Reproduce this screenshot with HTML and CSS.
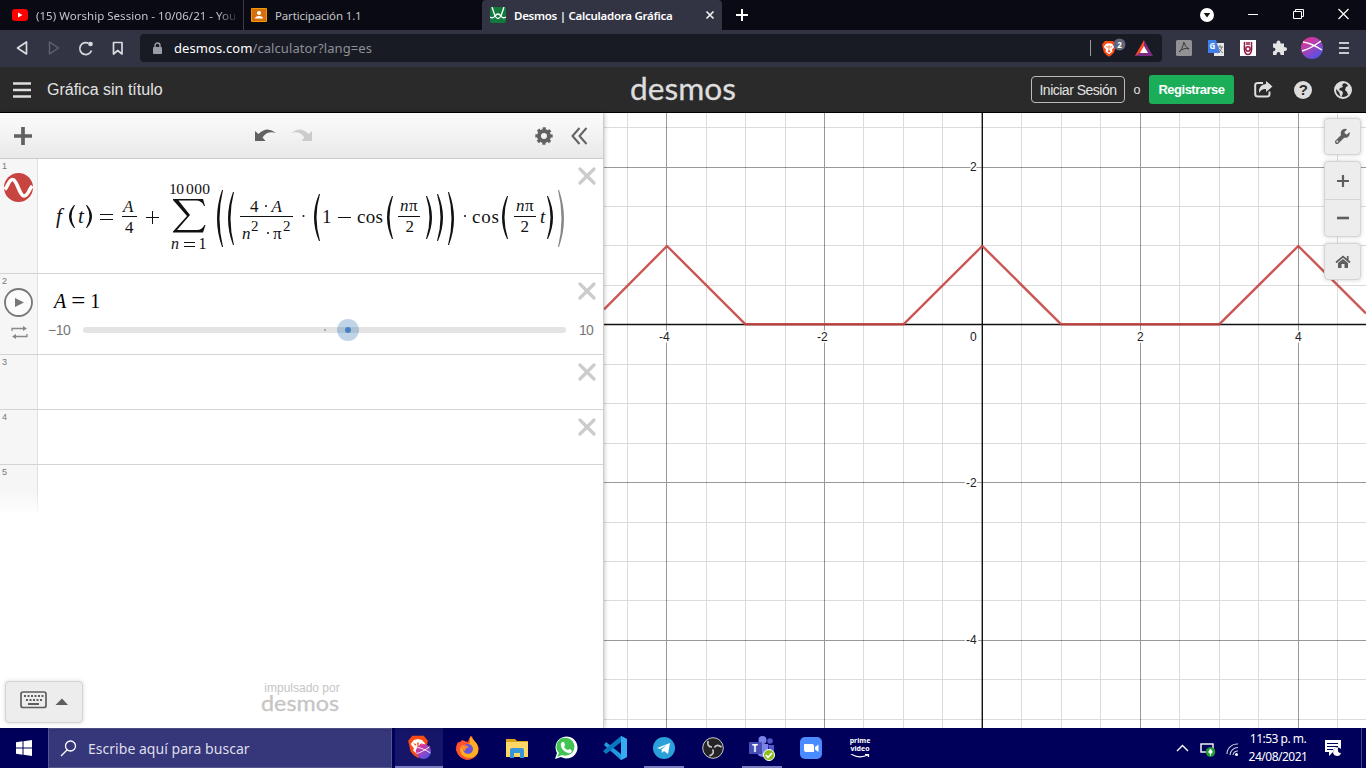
FILE: index.html
```html
<!DOCTYPE html>
<html lang="es">
<head>
<meta charset="utf-8">
<title>Desmos | Calculadora Gráfica</title>
<link rel="stylesheet" href="styles.css">
</head>
<body>
<svg class="defs" width="0" height="0">
  <symbol id="lp" viewBox="0 0 6 50" preserveAspectRatio="none"><path d="M6 0Q-1 25 6 50H5Q-5 25 5 0Z"/></symbol>
  <symbol id="rp" viewBox="0 0 6 50" preserveAspectRatio="none"><path d="M0 0Q7 25 0 50H1Q11 25 1 0Z"/></symbol>
  <symbol id="x" viewBox="0 0 18 18"><path d="M2 2L16 16M16 2L2 16" stroke="#ccc" stroke-width="3.200" stroke-linecap="round"/></symbol>
  <symbol id="ball" viewBox="0 0 22 22"><circle cx="11" cy="11" r="11" fill="url(#bg)"/><path d="M1 14Q9 12 20 4M2 5Q10 6 21 13" fill="none" stroke="#fff" stroke-width="1.300"/></symbol>
  <symbol id="lion" viewBox="0 0 24 28"><path d="M5 1H19L24 7 21 20Q18 25 12 28Q6 25 3 20L0 7Z" fill="#fb4b13"/><path d="M7 6L12 5 17 6 21 11 17 16 18 19 12 24 6 19 7 16 3 11Z" fill="#fff"/><path d="M6 10L10 11 9 13ZM18 10L14 11 15 13ZM11 9H13L12.500 17 15 19 12 21 9 19 11.500 17Z" fill="#fb4b13"/></symbol>
  <linearGradient id="bg" x1="0" y1="0" x2="0.700" y2="1"><stop offset="0" stop-color="#f7298d"/><stop offset="0.450" stop-color="#b340ae"/><stop offset="1" stop-color="#4e52ea"/></linearGradient>
</svg>

<div class="tabs">
  <div class="tab tab-yt">
    <svg width="16" height="12"><rect width="16" height="12" rx="3" fill="#f00"/><path d="M6 3.500V8.500L10.500 6Z" fill="#fff"/></svg>
    <span class="tab-text fade">(15) Worship Session - 10/06/21 - You</span>
  </div>
  <div class="tab tab-class">
    <svg width="16" height="14"><rect width="16" height="14" rx="1" fill="#f29900"/><rect x="1" y="1" width="14" height="12" fill="#d56e0c"/><circle cx="8" cy="5" r="2" fill="#fff"/><path d="M4 10.500Q4 8 8 8T12 10.500Z" fill="#fff"/></svg>
    <span class="tab-text">Participación 1.1</span>
  </div>
  <div class="tab tab-active">
    <svg width="16" height="16"><rect width="16" height="16" rx="2" fill="#127a3d"/><path d="M2 0L5 9Q8 14 11 9L14 0M0 10Q3 12 5 9Q8 5 11 9Q13 12 16 10" fill="none" stroke="#fff" stroke-width="1.300"/></svg>
    <span class="tab-text">Desmos | Calculadora Gráfica</span>
    <svg width="10" height="10" class="tab-close"><path d="M1.500 1.500L8.500 8.500M8.500 1.500L1.500 8.500" stroke="#eee" stroke-width="1.700"/></svg>
  </div>
  <svg class="newtab" width="12" height="12"><path d="M6 0V12M0 6H12" stroke="#fff" stroke-width="2"/></svg>
  <div class="win">
    <svg width="14" height="14"><circle cx="7" cy="7" r="7" fill="#fff"/><path d="M3.700 5H10.300L7 9.500Z" fill="#111"/></svg>
    <svg width="10" height="14"><path d="M0 6.500H10" stroke="#fff"/></svg>
    <svg width="11" height="14"><path d="M.5 3.500H8.500V10.500H.5ZM2.500 3V1.500H10.500V8.500H9" fill="none" stroke="#fff"/></svg>
    <svg width="11" height="14"><path d="M.5 1L10.500 11M10.500 1L.5 11" stroke="#fff" stroke-width="1.200"/></svg>
  </div>
</div>

<div class="bar">
  <svg width="124" height="20" class="nav" fill="none" stroke="#d8dade" stroke-width="1.700" stroke-linejoin="round"><path d="M10.500 4V16L1.500 10Z"/><path d="M33.500 4V16L42.500 10Z" stroke="#61646f" stroke-width="1.400"/><path d="M75.500 12.500A6 6 0 1 1 72.500 5.200"/><circle cx="74.500" cy="6" r="1.500" fill="#d8dade"/><path d="M97.500 4.500H106V16L101.700 12.500 97.500 16Z"/></svg>
  <div class="address">
    <svg width="9" height="12"><rect y="5" width="9" height="7" rx="1" fill="#9a9da5"/><path d="M2 5V3.500A2.500 2.500 0 0 1 7 3.500V5" fill="none" stroke="#9a9da5" stroke-width="1.400"/></svg>
    <span class="url"><b>desmos.com</b>/calculator?lang=es</span>
    <svg class="shields" width="65" height="24"><path d="M.5 4V20" stroke="#999"/><use href="#lion" x="12" y="4" width="14" height="17"/><circle cx="29.500" cy="8.500" r="6" fill="#60667a"/><text x="27.300" y="11.500" font-size="8" font-weight="bold" fill="#fff">2</text><path d="M54 4L45 20H54Z" fill="#fb4b23"/><path d="M54 4L63 20H45L54 14Z" fill="#7c2b7f"/><path d="M54 10L50 17H58Z" fill="#fff"/></svg>
  </div>
  <svg width="170" height="26" class="ext"><rect y="5" width="16" height="16" rx="1.500" fill="#929292"/><path d="M3 17Q6 15 7.500 9Q7.500 6 8.500 8Q8 11 13 14Q8 12 3 17" fill="none" stroke="#3a3a3a"/><rect x="38" y="8" width="10" height="13" fill="#e5e7e9"/><path d="M32 5H40L44 18H32Z" fill="#3f80ec"/><text x="33.500" y="14" font-size="8" font-weight="bold" fill="#fff">G</text><path d="M41 12H47M44 10V12M46 12Q45 17 41 18M42 13Q44 16 47 18" fill="none" stroke="#777"/><rect x="64" y="5" width="16" height="16" fill="#fff"/><path d="M68.500 7V9.500Q67.500 19.500 72 19.500T75.500 9.500V7M71 7V10M73 7V10" fill="none" stroke="#921944" stroke-width="1.500"/><circle cx="72" cy="14" r="2.200" fill="none" stroke="#921944" stroke-width="1.500"/><path d="M97 8.500H100.500Q100.500 5.500 102.500 5.500T104.500 8.500H108V12Q111 12 111 14T108 16V20H104.500Q104.500 17 102.500 17T100.500 20H97V16.500Q99.500 16 99.500 14.300T97 12.500Z" fill="#e4e4e7"/><use href="#ball" x="125" y="2" width="22" height="22"/></svg>
  <svg width="10" height="26" class="menu"><path d="M0 8H10M0 13H10M0 18H10" stroke="#c9cad0" stroke-width="1.800"/></svg>
</div>

<header class="header">
  <svg width="19" height="16"><path d="M0 1.500H18M0 8H18M0 14.500H18" stroke="#ddd" stroke-width="2.600"/></svg>
  <span class="title">Gráfica sin título</span>
  <svg class="logo" width="110" height="40"><text x="0" y="30" textLength="106" lengthAdjust="spacingAndGlyphs">desmos</text></svg>
  <span class="btn login">Iniciar Sesión</span><span class="o">o</span><span class="btn signup">Registrarse</span>
  <svg class="share" width="19" height="18"><path d="M9 2H4Q1.200 2 1.200 4V13Q1.200 15.500 4 15.500H13Q15.500 15.500 15.500 13V10.500" fill="none" stroke="#ddd" stroke-width="2"/><path d="M12 0L18.500 5.500 12 11V8Q7.500 7.500 5 12Q4.500 3.500 12 3Z" fill="#ddd"/></svg>
  <svg width="18" height="18"><circle cx="9" cy="9" r="9" fill="#ddd"/><text x="4.700" y="14" class="q">?</text></svg>
  <svg class="globe" width="18" height="18"><circle cx="9" cy="9" r="8" fill="none" stroke="#ddd" stroke-width="2"/><path d="M2 4L7 1 10 2 8 4 9 6 6 7 5 9 8 10 9 12 7 17 6 14 5 11 2 8ZM13 3L16 5 17 11 14 14 13 11 11 9 12 6 14 5Z" fill="#ddd"/></svg>
</header>

<main class="main">
  <section class="panel">
    <div class="toolbar">
      <svg width="18" height="18" class="add"><path d="M9 0V18M0 9H18" stroke="#616161" stroke-width="3.700"/></svg>
      <svg width="58" height="16" class="undo"><path d="M0 3L3.500 6Q12-2.500 21 5Q12 2.500 7.500 9.500L10.500 13H0Z" fill="#616161"/><path d="M57 3L53.500 6Q45-2.500 36 5Q45 2.500 49.500 9.500L46.500 13H57Z" fill="#ccc"/></svg>
      <svg width="18" height="18" viewBox="-9 -9 18 18" class="gear"><circle r="5" fill="none" stroke="#616161" stroke-width="4"/><circle r="7.200" fill="none" stroke="#616161" stroke-width="3" stroke-dasharray="3 2.655" transform="rotate(-12)"/></svg>
      <svg width="17" height="18"><path d="M8.500 1L1.500 9 8.500 17M15.500 1L8.500 9 15.500 17" fill="none" stroke="#616161" stroke-width="2"/></svg>
    </div>

    <div class="row row-formula">
      <div class="gutter"><span>1</span>
        <svg width="29" height="29"><circle cx="14.500" cy="14.500" r="14.500" fill="#c74440"/><path d="M.8 16.500C4 13 5 6.500 8.500 6.500C13 6.500 15.500 23 20 23C24 23 25 16 28.200 13" fill="none" stroke="#fff" stroke-width="3.600"/></svg>
      </div>
      <svg class="formula" width="530" height="114" viewBox="38 159 530 114">
        <g class="it"><text x="56" y="223" font-size="21">f</text><text x="78" y="223" font-size="21">t</text><text x="123" y="212" font-size="17">A</text><text x="171" y="249" font-size="16">n</text><text x="271.500" y="212" font-size="17">A</text><text x="242" y="239" font-size="17">n</text><text x="400" y="211" font-size="17">n</text><text x="516" y="211" font-size="17">n</text><text x="540" y="223">t</text></g>
        <text x="125" y="233" font-size="17">4</text>
        <text x="169" y="194" font-size="15.500" textLength="15">10</text><text x="186" y="194" font-size="15.500" textLength="24">000</text>
        <text x="198.500" y="249" font-size="16">1</text>
        <text x="250" y="212" font-size="17">4</text>
        <text x="251" y="231" font-size="15">2</text><text x="273" y="239" font-size="17">π</text><text x="283" y="231" font-size="15">2</text>
        <text x="322" y="223">1</text><text x="357" y="223" textLength="26">cos</text>
        <text x="409" y="211" font-size="17">π</text><text x="405.500" y="232" font-size="17">2</text>
        <text x="472" y="223" textLength="27">cos</text><text x="525" y="211" font-size="17">π</text><text x="520.500" y="232" font-size="17">2</text>
        <path d="M100 214.500H113M100 219.500H113M146 217.500H159M152.500 211V224M184 242.500H195M184 246.500H195M338 217.500H351M122 216.500H137M240 216.500H293M398 216.500H420M514 216.500H536" stroke="#111" fill="none"/>
        <path d="M173 199H203L205 206H204Q202 200.500 196 200.500H178.500L190 215 177 230H197Q202 230 204.500 225H205.500L203 232.500H173V231.500L187 216 173 200Z"/>
        <circle cx="266" cy="206" r="1"/><circle cx="268" cy="233" r="1"/><circle cx="303.500" cy="216" r="1"/><circle cx="465" cy="216" r="1"/>
        <g><use href="#lp" x="69" y="205" width="6" height="23"/><use href="#rp" x="86" y="205" width="6" height="23"/><use href="#lp" x="217" y="190" width="6" height="57"/><use href="#lp" x="228" y="192" width="6" height="53"/><use href="#lp" x="314" y="194" width="6" height="47"/><use href="#lp" x="387" y="196" width="6" height="43"/><use href="#rp" x="426" y="196" width="6" height="43"/><use href="#rp" x="437" y="194" width="6" height="47"/><use href="#rp" x="448" y="192" width="6" height="53"/><use href="#lp" x="502" y="196" width="6" height="43"/><use href="#rp" x="547" y="196" width="6" height="43"/><use href="#rp" x="558" y="190" width="6" height="57" opacity=".5"/></g>
      </svg>
      <svg class="del" width="18" height="18"><use href="#x"/></svg>
    </div>

    <div class="row row-slider">
      <div class="gutter"><span>2</span>
        <svg width="29" height="54"><circle cx="14.500" cy="14.500" r="13.500" fill="#fff" fill-opacity=".5" stroke="#777" stroke-width="1.800"/><path d="M11 10V19L20 14.500Z" fill="#777"/><path d="M8 43V40.500H20M23 46V48.500H10" fill="none" stroke="#888" stroke-width="1.300"/><path d="M19 38L23 40.500 19 43ZM12 46L8 48.500 12 51Z" fill="#888"/></svg>
      </div>
      <div class="slider">
        <div class="assign"><i>A</i><span class="eq">=</span><span>1</span></div>
        <div class="range"><span class="min">−10</span>
          <svg width="483" height="22"><rect y="8" width="483" height="6" rx="3" fill="#e4e4e4"/><rect x="241" y="10" width="2" height="2" fill="#aaa"/><circle cx="265" cy="11" r="11" fill="#2d70b3" fill-opacity=".3"/><circle cx="265" cy="11" r="3" fill="#4781c1"/></svg>
          <span class="max">10</span></div>
      </div>
      <svg class="del" width="18" height="18"><use href="#x"/></svg>
    </div>
    <div class="row row-empty"><div class="gutter"><span>3</span></div><svg class="del" width="18" height="18"><use href="#x"/></svg></div>
    <div class="row row-empty"><div class="gutter"><span>4</span></div><svg class="del" width="18" height="18"><use href="#x"/></svg></div>
    <div class="row row-last"><div class="gutter"><span>5</span></div></div>

    <div class="foot">
      <div class="keypad"><svg width="48" height="20"><rect x="1" y="1" width="25" height="15.500" rx="2" fill="none" stroke="#5e5e5e" stroke-width="1.700"/><path d="M4 5H24M6 9H22" stroke="#5e5e5e" stroke-width="2" stroke-dasharray="2 1.500"/><path d="M8 13H19" stroke="#5e5e5e" stroke-width="2"/><path d="M35.500 14L42 7.500 48 14Z" fill="#5e5e5e"/></svg></div>
      <div class="powered"><span>impulsado por</span><svg class="minilogo" width="82" height="26"><text x="1" y="16" textLength="78" lengthAdjust="spacingAndGlyphs">desmos</text></svg></div>
    </div>
  </section>

  <section class="graph">
    <svg width="762" height="615" viewBox="604 113 762 615">
      <g shape-rendering="crispEdges" fill="none">
        <path stroke="#000" stroke-opacity=".14" d="M627.500 113V728M706.500 113V728M745.500 113V728M785.500 113V728M863.500 113V728M903.500 113V728M942.500 113V728M1021.500 113V728M1061.500 113V728M1100.500 113V728M1179.500 113V728M1219.500 113V728M1258.500 113V728M1337.500 113V728M604 127.500H1366M604 206.500H1366M604 245.500H1366M604 285.500H1366M604 364.500H1366M604 403.500H1366M604 443.500H1366M604 522.500H1366M604 561.500H1366M604 600.500H1366M604 679.500H1366M604 719.500H1366"/>
        <path stroke="#000" stroke-opacity=".4" d="M666.500 113V728M824.500 113V728M1140.500 113V728M1298.500 113V728M604 167.500H1366M604 482.500H1366M604 640.500H1366"/>
      </g>
      <path d="M982.300 113V728M604 324.500H1366" stroke="#111" stroke-width="1.400"/>
      <g class="ticks"><text x="659" y="341">-4</text><text x="817" y="341">-2</text><text x="970" y="341">0</text><text x="1137" y="341">2</text><text x="1295" y="341">4</text><text x="970" y="171">2</text><text x="966" y="487">-2</text><text x="966" y="644">-4</text></g>
      <path d="M604 309.500L667 246 745.500 324.300H903.500L982.300 246 1061.200 324.300H1219.200L1298.300 246 1366 313.500" fill="none" stroke="#c74440" stroke-opacity=".9" stroke-width="2.400" stroke-linejoin="round"/>
    </svg>
    <div class="controls">
      <div class="ctl"><svg width="17" height="17"><path d="M3 14L10 7" stroke="#5e5e5e" stroke-width="4" stroke-linecap="round"/><path d="M15.500 4L13 6.500 10.500 6 10.500 4 13 1.200A4.500 4.500 0 1 0 15.500 4Z" fill="#5e5e5e"/><circle cx="3.300" cy="13.500" r="1" fill="#eee"/></svg></div>
      <div class="zoom"><div><svg width="12" height="12"><path d="M6 0V12M0 6H12" stroke="#5e5e5e" stroke-width="2.200"/></svg></div><div><svg width="12" height="12"><path d="M0 6H12" stroke="#5e5e5e" stroke-width="2.600"/></svg></div></div>
      <div class="ctl"><svg width="16" height="14"><path d="M1 7.500L8 1.500 15 7.500M12.700 1V5" fill="none" stroke="#5e5e5e" stroke-width="1.700"/><path d="M3 8L8 4 13 8V13H9.500V9H6.500V13H3Z" fill="#5e5e5e"/></svg></div>
    </div>
  </section>
</main>

<footer class="taskbar">
  <div class="start"><svg width="16" height="16"><path d="M0 2.300L6.500 1.300V7.500H0ZM7.500 1.200L16 0V7.500H7.500ZM0 8.500H6.500V14.700L0 13.700ZM7.500 8.500H16V16L7.500 14.800Z" fill="#fff"/></svg></div>
  <div class="search"><svg width="17" height="17"><circle cx="10.500" cy="6" r="5" fill="none" stroke="#fff" stroke-width="1.300"/><path d="M7 10L1 16" stroke="#fff" stroke-width="1.300"/></svg><span>Escribe aquí para buscar</span></div>
  <div class="apps">
    <div class="app current"><svg width="26" height="28"><use href="#lion" x="2" y="2" width="20" height="23"/><use href="#ball" x="10" y="11" width="15" height="15"/></svg></div>
    <div class="app"><svg width="24" height="24"><path d="M2 6Q4 7 6 4Q8 5 12 6Q13 1 16 0Q17 5 20 7Q24 11 22 17Q18 24 11 24Q2 22 0 14Q0 9 2 6Z" fill="#ff532d"/><path d="M14 0Q18 4 21 8Q25 19 15 22Q5 22 4 14Q4 9 10 9L14 7Z" fill="#ffaf1d"/><circle cx="12" cy="13" r="5" fill="#6955dc"/><path d="M5 10Q9 8 13 11Q9 12 9 15Q5 14 5 10" fill="#ff8630"/></svg></div>
    <div class="app"><svg width="22" height="20"><path d="M0 1H9L11 3H22V19H0Z" fill="#dba31c"/><path d="M0 4H22V19H0Z" fill="#ffd766"/><path d="M4 20V12Q4 10 6 10H16Q18 10 18 12V20H14V15H8V20Z" fill="#3796d9"/></svg></div>
    <div class="app"><svg width="24" height="24"><path d="M1 23L3 17A11 11 0 1 1 7 21Z" fill="#fff"/><path d="M3 21L5 17A9 9 0 1 1 8 19Z" fill="#41c452"/><path d="M8 6L10 6 11 9 10 11Q12 14 14 14L16 13 18 15Q17 18 14 17Q8 15 7 10Q6 8 8 6Z" fill="#fff"/></svg></div>
    <div class="app"><svg width="24" height="24"><path d="M18 0L24 3V21L18 24L1 9 3 6 18 18Z" fill="#1f9be2"/><path d="M18 6L3 18 0 15 18 0Z" fill="#0878c0"/><path d="M18 0L24 3V21L18 24Z" fill="#36aaf2"/></svg></div>
    <div class="app open"><svg width="22" height="22"><circle cx="11" cy="11" r="11" fill="#2aa1da"/><path d="M4 11L17 6 15 17 11 14 9 16 8.500 12.500 14 8 7 12Z" fill="#fff"/></svg></div>
    <div class="app"><svg width="22" height="22" viewBox="-11 -11 22 22"><circle r="10.300" fill="#252326" stroke="#c7c7ca"/><g fill="none" stroke="#c7c7ca" stroke-width="1.700"><path d="M-1-1Q-6-1-5-7"/><path d="M-1-1Q-6-1-5-7" transform="rotate(120)"/><path d="M-1-1Q-6-1-5-7" transform="rotate(240)"/></g></svg></div>
    <div class="app open"><svg width="26" height="26"><circle cx="13.500" cy="5" r="4" fill="#7b83eb"/><circle cx="21" cy="6" r="2.800" fill="#5059c9"/><path d="M8 9H19V20Q14 24 9 20Z" fill="#7b83eb"/><path d="M19 10H25V18L21 20Z" fill="#5059c9"/><rect y="7" width="13" height="12" rx="1" fill="#464eb8"/><text x="3" y="17" class="teams">T</text><circle cx="20" cy="20" r="5.500" fill="#8cbd18" stroke="#fff"/><path d="M17 20L19 22.500 23 18" fill="none" stroke="#fff" stroke-width="1.700"/></svg></div>
    <div class="app"><svg width="22" height="22"><rect width="22" height="22" rx="5" fill="#4a8cff"/><path d="M4 7H12Q14 7 14 9V15H6Q4 15 4 13ZM15 10L18.500 7.500V15L15 12.500Z" fill="#fff"/></svg></div>
    <div class="app"><div class="prime"><span>prime</span><span>video</span><svg width="20" height="5"><path d="M1 0Q9 5 18 1M15 .5H18.500V3" fill="none" stroke="#fff" stroke-width="1.200"/></svg></div></div>
  </div>
  <div class="tray">
    <svg width="64" height="20"><path d="M1 13L6.500 7.500 12 13" fill="none" stroke="#fff" stroke-width="1.400"/><rect x="25" y="6" width="12" height="8" fill="none" stroke="#fff" stroke-width="1.400"/><circle cx="34.500" cy="14" r="4.800" fill="#249b38"/><path d="M34.500 11L32.500 14 34.500 16 36.500 14ZM34.500 15V18" fill="#fff" stroke="#fff" stroke-width=".7"/><g fill="none" stroke="#ccd" stroke-width="1.100"><path d="M51 16A10 10 0 0 1 62 6M54 17A8 8 0 0 1 62 9.500M57 17A5 5 0 0 1 62 13"/></g><circle cx="60.500" cy="16.500" r="1.500" fill="#fff"/></svg>
    <div class="clock"><span class="time">11:53 p. m.</span><span>24/08/2021</span></div>
    <svg width="17" height="17" class="note"><path d="M0 0H16V12H8L4 16V12H0Z" fill="#fff"/><path d="M2 3.500H13M2 6.500H13M2 9.500H8" stroke="#00005a"/><circle cx="12.500" cy="12" r="4.500" fill="#00005a"/><path d="M13 8A4 4 0 1 0 16 13Q12 13 13 8Z" fill="#fff"/></svg>
    <span class="peek"></span>
  </div>
</footer>
</body>
</html>
```
FILE: styles.css
```css
* { box-sizing: border-box; }
body { margin: 0; width: 1366px; height: 768px; overflow: hidden; font-family: "Liberation Sans", Arial, sans-serif; display: flex; flex-direction: column; background: #fff; }
svg { display: block; flex: none; }
.defs { position: absolute; }
span { white-space: nowrap; }

.tabs, .bar, .taskbar { font-family: "Noto Sans", sans-serif; }
.tabs { height: 30px; flex: none; background: #090a13; display: flex; align-items: center; font-size: 11.5px; color: #c4c5c9; }
.tab { height: 30px; display: flex; align-items: center; }
.tab-yt { width: 244px; padding-left: 12px; gap: 8px; border-right: 1px solid #3c3d45; }
.fade { width: 206px; letter-spacing: .03px; -webkit-mask-image: linear-gradient(90deg, #000 88%, transparent 99%); mask-image: linear-gradient(90deg, #000 88%, transparent 99%); }
.tab-class { width: 238px; padding-left: 7px; gap: 8px; letter-spacing: -.15px; }
.tab-active { width: 240px; padding: 0 7px 0 8px; gap: 8px; background: #323443; color: #fff; font-weight: 600; border-radius: 4px 4px 0 0; font-size: 11.5px; letter-spacing: -.27px; }
.tab-close { margin-left: auto; }
.newtab { margin-left: 14px; }
.win { margin: 0 17px 0 auto; display: flex; align-items: center; gap: 34.500px; }

.bar { height: 37px; flex: none; background: #323443; display: flex; align-items: center; padding-left: 16px; padding-bottom: 1px; }
.address { width: 1022px; height: 28px; border-radius: 4px; background: #191b24; display: flex; align-items: center; padding-left: 13px; font-size: 13px; color: #8e9097; }
.url { margin-left: 12px; letter-spacing: .09px; }
.url b { font-weight: 400; color: #fff; }
.shields { margin: 0 7px 0 auto; }
.ext { margin-left: 14px; width: 148px; }
.menu { margin-left: 15px; }

.header { height: 46px; flex: none; background: #2a2a2a; border-bottom: 1px solid #000; display: flex; align-items: center; padding-left: 13px; color: #e2e2e2; font-size: 16px; }
.title { margin-left: 15px; width: 583px; }
.logo { font: 400 31px Lato, sans-serif; fill: #ddd; stroke: #ddd; stroke-width: .3px; }
.btn { height: 27px; border-radius: 4px; display: flex; align-items: center; justify-content: center; font-size: 14px; }
.login { width: 94px; margin-left: 291px; border: 1px solid #bbb; letter-spacing: -.5px; }
.o { width: 24px; text-align: center; font-size: 12.5px; }
.signup { width: 85px; height: 29px; background: #1bad58; color: #fff; font-weight: bold; font-size: 13px; letter-spacing: -.5px; border-radius: 3px; }
.share { margin: 0 21px 0 20px; }
.q { font-size: 15px; font-weight: bold; fill: #2a2a2a; }
.globe { margin-left: 22px; }

.main { height: 615px; flex: none; display: flex; }
.panel { width: 604px; border-right: 1px solid #ccc; display: flex; flex-direction: column; box-shadow: 1px 0 4px rgba(0,0,0,.2); z-index: 1; background: #fff; }
.toolbar { height: 46px; flex: none; display: flex; align-items: center; padding-left: 14px; background: linear-gradient(#fcfcfc, #e9e9e9); border-bottom: 1px solid #ccc; }
.undo { margin-left: 223px; }
.gear { margin: 0 18px 0 222px; }
.row { display: flex; flex: none; border-bottom: 1px solid #d4d4d4; }
.row-formula { height: 115px; }
.row-slider { height: 81px; }
.row-empty { height: 55px; }
.row-last { height: 50px; border: 0; }
.gutter { flex: none; width: 38px; background: #f6f6f6; border-right: 1px solid #e0e0e0; padding: 2px 0 0 2px; font-size: 9px; line-height: 11px; color: #777; }
.gutter svg { margin: 1px 0 0 2px; }
.row-last .gutter { background: linear-gradient(#f6f6f6 50%, #fff); border-image: linear-gradient(#e0e0e0 50%, #fff) 1; }
.formula { font: 19px "Liberation Serif", serif; fill: #111; }
.it { font-style: italic; }
.del { margin: 8px 7px 0 auto; }
.slider { font-family: "Liberation Serif", serif; width: 540px; flex: none; }
.assign { display: flex; font-size: 20px; line-height: 22px; padding: 16px 0 0 16px; }
.eq { margin: 0 5px 0 5px; font-size: 25px; }
.range { display: flex; align-items: center; padding-left: 10px; margin-top: 7px; font: 14px "Liberation Sans", sans-serif; color: #777; }
.min { flex: none; width: 35px; letter-spacing: -.5px; }
.max { flex: none; margin: 0 -20px 0 13px; letter-spacing: -.8px; }
.row-slider .del { margin-left: 0; }
.foot { margin-top: auto; height: 48px; display: flex; padding-left: 5px; }
.keypad { width: 78px; height: 42px; margin-top: 1px; background: #ededed; border: 1px solid #d3d3d3; border-radius: 4px; box-shadow: 0 0 4px rgba(0,0,0,.15); padding: 9px 0 0 14px; }
.powered { margin: 1px 0 0 177px; width: 84px; text-align: center; color: #c5c5c5; font-size: 12px; line-height: 14px; }
.minilogo { font: 22px Lato, sans-serif; fill: #c5c5c5; stroke: #c5c5c5; stroke-width: .3px; }

.graph { width: 762px; position: relative; }
.ticks { font: 12px "Liberation Sans", sans-serif; fill: #222; stroke: #fff; stroke-width: 3px; paint-order: stroke; }
.controls { position: absolute; top: 5px; right: 5px; width: 37px; display: flex; flex-direction: column; gap: 6px; }
.ctl, .zoom { background: #ededed; border: 1px solid #d5d5d5; border-radius: 4px; box-shadow: 0 0 4px rgba(0,0,0,.18); }
.ctl, .zoom div { height: 37px; display: flex; align-items: center; justify-content: center; }
.zoom div + div { border-top: 1px solid #d5d5d5; }

.taskbar { height: 40px; flex: none; background: #00005a; display: flex; color: #fff; }
.start { width: 48px; display: flex; align-items: center; justify-content: center; }
.search { width: 344px; background: #36367b; border: 1px solid #55558f; display: flex; align-items: center; padding-left: 11px; gap: 11px; font-size: 14px; color: #dedeea; letter-spacing: .03px; }
.apps { margin-left: 3px; display: flex; gap: 1px; }
.app { width: 48px; height: 40px; display: flex; align-items: center; justify-content: center; }
.current { background: #15156a; border-bottom: 2px solid #7b7bc0; }
.open { background: linear-gradient(#7b7bc0, #7b7bc0) 50% 100% / 40px 2px no-repeat; }
.teams { font: bold 10px "Noto Sans", sans-serif; fill: #fff; }
.prime { display: flex; flex-direction: column; align-items: center; font: bold 7px/8px "Noto Sans", sans-serif; }
.prime svg { margin-top: 1px; }
.tray { margin-left: auto; width: 190px; display: flex; align-items: center; }
.clock { width: 72px; margin-left: 2px; display: flex; flex-direction: column; align-items: center; font-size: 12px; line-height: 18px; letter-spacing: -.5px; }
.note { margin-left: 11px; }
.peek { margin-left: 19px; width: 1px; height: 40px; background: #44447e; }
```
